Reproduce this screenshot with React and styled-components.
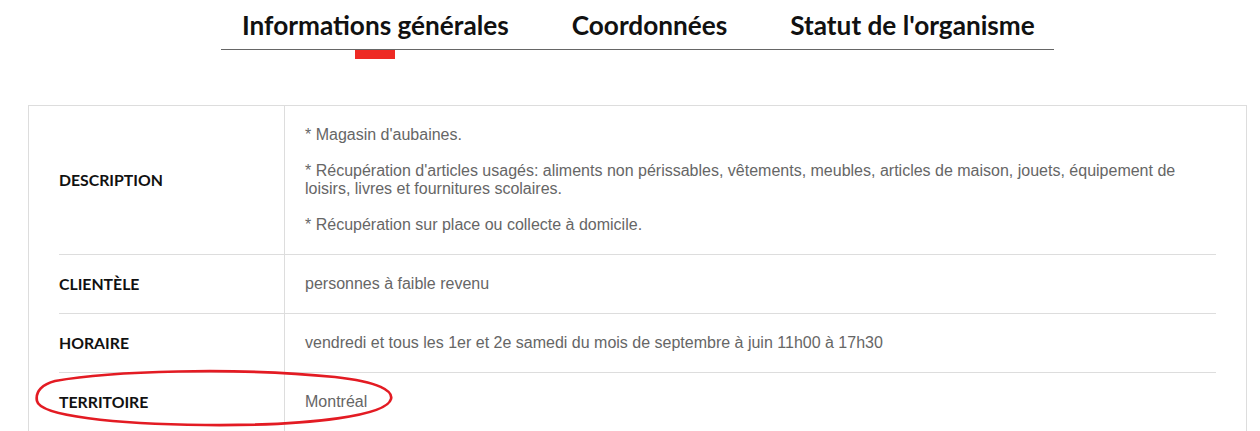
import React from 'react'
import styled, { createGlobalStyle } from 'styled-components'

const GlobalStyle = createGlobalStyle`
  html, body {
    margin: 0;
    padding: 0;
    background: #fff;
    overflow: hidden;
  }
`;

const tabs = ["Informations générales", "Coordonnées", "Statut de l'organisme"];

const rows = [
  {
    label: "Description",
    value: [
      "* Magasin d'aubaines.",
      "* Récupération d'articles usagés: aliments non périssables, vêtements, meubles, articles de maison, jouets, équipement de loisirs, livres et fournitures scolaires.",
      "* Récupération sur place ou collecte à domicile.",
    ],
  },
  { label: "Clientèle", value: ["personnes à faible revenu"] },
  { label: "Horaire", value: ["vendredi et tous les 1er et 2e samedi du mois de septembre à juin 11h00 à 17h30"] },
  { label: "Territoire", value: ["Montréal"] },
];

const App = () => {
  return (
    <Page>
      <GlobalStyle />
      <TabBar>
        {tabs.map((t, i) => (
          <Tab key={t} active={i === 0}>{t}</Tab>
        ))}
      </TabBar>
      <InfoTable>
        {rows.map((r) => (
          <Row key={r.label}>
            <Label>{r.label}</Label>
            <Value>
              {r.value.map((p, i) => (
                <p key={i}>{p}</p>
              ))}
            </Value>
          </Row>
        ))}
      </InfoTable>
      {/* hand drawn red circle around the territory row */}
      <Circle width="362" height="62" viewBox="0 0 362 62">
        <path
          d="M20 13 C75 3 200 -1 300 9 C345 14 358 23 356 31 C352 47 280 58 170 57 C80 56 5 48 2 33 C0 23 8 16 20 13 Z"
          fill="none"
          stroke="#e31b23"
          strokeWidth="2.7"
        />
      </Circle>
    </Page>
  )
}

export default App

const Page = styled.div`
  position: relative;
  width: 1260px;
  height: 431px;
  overflow: hidden;
`;

const TabBar = styled.nav`
  display: flex;
  gap: 63px;
  width: 833px;
  margin-left: 221px;
  padding-left: 21px;
  box-sizing: border-box;
  border-bottom: 1px solid #666;
`;

const Tab = styled.div`
  position: relative;
  font-family: Lato, "Liberation Sans", sans-serif;
  font-weight: 700;
  font-size: 26.2px;
  line-height: 31px;
  color: #111;
  padding: 10px 0 8px;

  &::after {
    content: "";
    display: ${(props) => (props.active ? "block" : "none")};
    position: absolute;
    left: 50%;
    bottom: -10px;
    width: 40px;
    height: 9px;
    margin-left: -20px;
    background: #ee2a24;
  }
`;

const InfoTable = styled.div`
  margin: 55px 0 0 28px;
  width: 1219px;
  box-sizing: border-box;
  border: 1px solid #ddd;
  padding: 0 30px;
`;

const Row = styled.div`
  display: grid;
  grid-template-columns: 226px 1fr;
  border-bottom: 1px solid #ddd;
`;

const Label = styled.div`
  display: flex;
  align-items: center;
  padding-bottom: 2px;
  border-right: 1px solid #ddd;
  font-family: Lato, "Liberation Sans", sans-serif;
  font-weight: 700;
  font-size: 15.8px;
  text-transform: uppercase;
  color: #111;
`;

const Value = styled.div`
  padding: 20px;
  font-family: "Liberation Sans", Arial, sans-serif;
  font-size: 16px;
  line-height: 18px;
  color: #666;

  p {
    margin: 0 0 18px;
  }
  p:last-child {
    margin-bottom: 0;
  }
`;

const Circle = styled.svg`
  position: absolute;
  left: 35px;
  top: 368px;
`;
